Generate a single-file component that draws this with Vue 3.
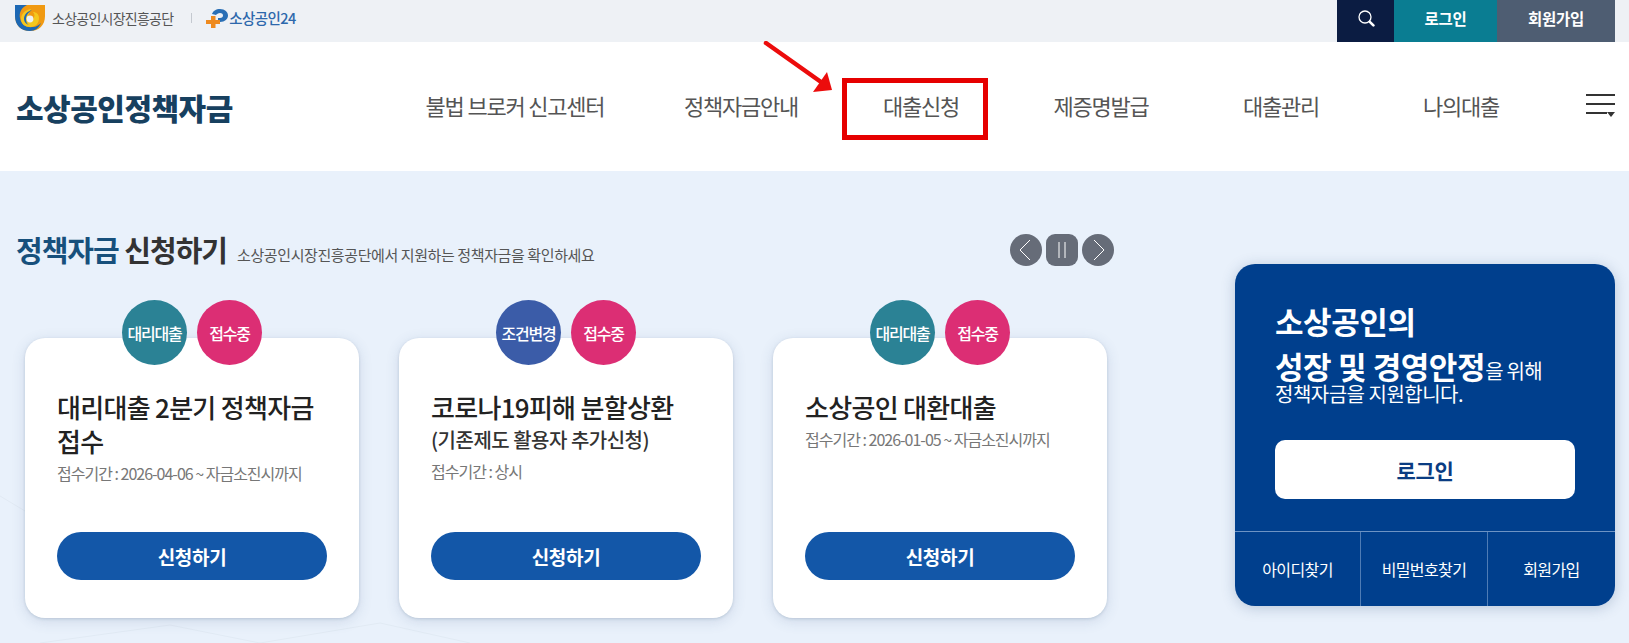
<script setup>
const nav = ['불법 브로커 신고센터', '정책자금안내', '대출신청', '제증명발급', '대출관리', '나의대출']

const cards = [
  { id: 1, badge: '대리대출', badgeType: 'teal', title: '대리대출 2분기 정책자금 접수', sub: '', period: '접수기간 : 2026-04-06 ~ 자금소진시까지' },
  { id: 2, badge: '조건변경', badgeType: 'blue', title: '코로나19피해 분할상환', sub: '(기존제도 활용자 추가신청)', period: '접수기간 : 상시' },
  { id: 3, badge: '대리대출', badgeType: 'teal', title: '소상공인 대환대출', sub: '', period: '접수기간 : 2026-01-05 ~ 자금소진시까지' },
]

const links = ['아이디찾기', '비밀번호찾기', '회원가입']
</script>

<template>
  <div class="page">
    <div class="topbar">
      <div class="top-left">
        <svg class="logo-org" viewBox="0 0 30 26" width="30" height="26">
          <path d="M0 0h30v11c0 9-6 15-15 15S0 20 0 11z" fill="#f09a12" />
          <path d="M0 0h12C6 3 4 8 5 13c1 6 6 10 13 9 3 0 6-2 8-4-2 5-6 8-11 8C6 26 0 20 0 11z" fill="#1c68b4" />
          <path d="M16 4c-6 1-10 5-10 10 0 5 4 8 9 8 6 0 9-4 9-9 0-4-3-6-6-6 2 2 2 5 0 7-2 1-4 1-5-1 0-4 2-7 3-9z" fill="#f4c71f" />
          <circle cx="15" cy="14" r="3.400" fill="#eef1f5" />
          <path d="M11 14c0-4 3-7 6-9-4 1-8 4-8 9 0 3 2 5 5 6-2-1-3-3-3-6z" fill="#1c68b4" />
        </svg>
        <span class="org-name">소상공인시장진흥공단</span>
        <span class="top-sep"></span>
        <svg class="logo-24" viewBox="0 0 22 20" width="22" height="20">
          <path d="M6 5C7 2 10 0 14 0c5 0 8 3 8 6.500S19 13 14 13h-2V9h2c2 0 3-1 3-2.500S16 4 14 4c-2 0-3 1-4 2z" fill="#2a6fb5" />
          <path d="M5 7h4.500v4H14v4H9.500v4H5v-4H0v-4h5z" fill="#ee8a1e" />
        </svg>
        <span class="brand-24">소상공인24</span>
      </div>
      <div class="top-right">
        <div class="top-btn search">
          <svg viewBox="0 0 18 18" width="18" height="18" fill="none" stroke="#fff">
            <circle cx="8" cy="8" r="6" stroke-width="1.300" />
            <path d="M12.800 12.800l3.600 3.600" stroke-width="2.600" stroke-linecap="round" />
          </svg>
        </div>
        <div class="top-btn login">로그인</div>
        <div class="top-btn join">회원가입</div>
      </div>
    </div>

    <header class="header">
      <h1 class="site-title">소상공인정책자금</h1>
      <nav class="gnb">
        <a v-for="item in nav" :key="item" class="gnb-item">{{ item }}</a>
      </nav>
      <div class="menu-icon">
        <span></span>
        <span></span>
        <span class="short"></span>
      </div>

      <!-- 빨간 표시 (스크린샷 주석) -->
      <svg class="mark-arrow" viewBox="0 0 70 56" width="70" height="56">
        <path d="M3 2l55 39" stroke="#ec0c0c" stroke-width="4.500" stroke-linecap="round" />
        <path d="M69 49L64 31 50 51z" fill="#ec0c0c" />
      </svg>
      <div class="mark-box"></div>
    </header>

    <main class="main">
      <svg class="bg-lines" viewBox="0 0 1629 472" width="1629" height="472" fill="none" stroke="#e1eaf4">
        <path d="M0 325l40 24 30-14M40 472l130-18M170 454l90 18M260 472l120-20 90 20" />
      </svg>

      <section class="apply">
        <div class="apply-head">
          <h2 class="apply-title"><em>정책자금</em> 신청하기</h2>
          <p class="apply-desc">소상공인시장진흥공단에서 지원하는 정책자금을 확인하세요</p>
          <div class="controls">
            <button class="ctrl round">
              <svg viewBox="0 0 32 32" width="32" height="32" fill="none" stroke="#fff" stroke-width="1"><path d="M20 6L10 16l10 10" /></svg>
            </button>
            <button class="ctrl">
              <svg viewBox="0 0 32 32" width="32" height="32" fill="none" stroke="#fff" stroke-width="1"><path d="M13 8v16M19 8v16" /></svg>
            </button>
            <button class="ctrl round">
              <svg viewBox="0 0 32 32" width="32" height="32" fill="none" stroke="#fff" stroke-width="1"><path d="M12 6l10 10-10 10" /></svg>
            </button>
          </div>
        </div>

        <div class="cards">
          <article v-for="card in cards" :key="card.id" class="card">
            <div class="badges">
              <span class="badge" :class="card.badgeType">{{ card.badge }}</span>
              <span class="badge pink">접수중</span>
            </div>
            <h3 class="card-title">{{ card.title }}</h3>
            <p v-if="card.sub" class="card-sub">{{ card.sub }}</p>
            <p class="card-period">{{ card.period }}</p>
            <button class="card-btn">신청하기</button>
          </article>
        </div>
      </section>

      <aside class="panel">
        <div class="panel-body">
          <p class="panel-text">
            <strong>소상공인의<br />성장 및 경영안정</strong>을 위해
          </p>
          <p class="panel-sub">정책자금을 지원합니다.</p>
          <button class="panel-login">로그인</button>
        </div>
        <div class="panel-links">
          <a v-for="link in links" :key="link">{{ link }}</a>
        </div>
      </aside>
    </main>
  </div>
</template>

<style scoped>
.page {
  width: 1629px;
  height: 643px;
  overflow: hidden;
  background: #e9f1fb;
  font-family: "Noto Sans CJK KR", "Noto Sans", sans-serif;
}

.topbar {
  height: 42px;
  display: flex;
  justify-content: space-between;
  background: #eef1f5;
  padding: 0 14px 0 15px;
}

.top-left {
  display: flex;
  align-items: center;
  padding-bottom: 7px;
}

.logo-org {
  margin-top: 1px;
}

.org-name {
  margin-left: 7px;
  font-size: 14px;
  letter-spacing: -0.75px;
  color: #555;
}

.top-sep {
  width: 1px;
  height: 10px;
  margin: 0 14px 0 18px;
  background: #c4c9d0;
}

.logo-24 {
  margin-top: 2px;
}

.brand-24 {
  margin-left: 1px;
  font-size: 14.5px;
  font-weight: 500;
  letter-spacing: -0.6px;
  color: #2d68ac;
}

.top-right {
  display: flex;
}

.top-btn {
  display: flex;
  align-items: center;
  justify-content: center;
  padding-bottom: 7px;
  font-size: 15.5px;
  font-weight: 700;
  color: #fff;
  letter-spacing: -0.3px;
}

.search {
  width: 57px;
  background: #0b1c42;
}

.login {
  width: 103px;
  background: #0a7d92;
}

.join {
  width: 118px;
  background: #4e5d72;
}

.header {
  position: relative;
  height: 129px;
  display: flex;
  align-items: center;
  padding: 0 14px 0 16px;
  background: #fff;
}

.site-title {
  width: 363px;
  margin: 0;
  font-size: 30px;
  font-weight: 900;
  letter-spacing: -0.5px;
  color: #17405f;
}

.gnb {
  display: grid;
  grid-template-columns: 272px repeat(5, 180px);
  margin-bottom: 4px;
  text-align: center;
}

.gnb-item {
  font-size: 22px;
  font-weight: 400;
  letter-spacing: -1.2px;
  color: #555;
}

.menu-icon {
  position: relative;
  margin-left: auto;
  margin-bottom: 5px;
  width: 29px;
  display: flex;
  flex-direction: column;
  gap: 7px;
}

.menu-icon span {
  height: 2px;
  background: #333;
}

.menu-icon .short {
  width: 21px;
}

.menu-icon .short::after {
  content: "";
  position: absolute;
  right: 0;
  bottom: -3px;
  border: 4px solid transparent;
  border-bottom: none;
  border-top: 5px solid #333;
}

.mark-arrow {
  position: absolute;
  left: 763px;
  top: -1px;
}

.mark-box {
  position: absolute;
  left: 842px;
  top: 36px;
  width: 146px;
  height: 62px;
  box-sizing: border-box;
  border: 5px solid #e60000;
}

.main {
  position: relative;
  height: 472px;
  display: flex;
  overflow: hidden;
}

.bg-lines {
  position: absolute;
  left: 0;
  top: 0;
}

.apply {
  position: relative;
  width: 1098px;
  margin-left: 16px;
}

.apply-head {
  height: 32px;
  margin-top: 63px;
  display: flex;
  align-items: center;
}

.apply-title {
  margin: 0 0 2px;
  font-size: 29px;
  font-weight: 700;
  letter-spacing: -1px;
  color: #333;
}

.apply-title em {
  font-style: normal;
  color: #17507c;
}

.apply-desc {
  margin: 8px 0 0 10px;
  font-size: 15px;
  letter-spacing: -0.4px;
  color: #555;
}

.controls {
  margin-left: auto;
  display: flex;
  gap: 4px;
}

.ctrl {
  width: 32px;
  height: 32px;
  padding: 0;
  border: none;
  border-radius: 9px;
  background: #666c78;
}

.ctrl svg {
  display: block;
}

.ctrl.round {
  border-radius: 50%;
}

.cards {
  margin: 72px 0 0 9px;
  display: flex;
  gap: 40px;
}

.card {
  position: relative;
  width: 334px;
  height: 280px;
  box-sizing: border-box;
  padding: 52px 32px 38px;
  display: flex;
  flex-direction: column;
  background: #fff;
  border-radius: 20px;
  box-shadow: 0 1px 3px rgba(70, 100, 130, 0.2), 0 3px 14px rgba(60, 90, 130, 0.16);
}

.badges {
  position: absolute;
  left: 0;
  right: 0;
  top: -38px;
  display: flex;
  justify-content: center;
  gap: 10px;
}

.badge {
  width: 65px;
  height: 65px;
  display: flex;
  align-items: center;
  justify-content: center;
  border-radius: 50%;
  font-size: 16px;
  font-weight: 500;
  letter-spacing: -1.2px;
  color: #fff;
}

.badge.teal {
  background: #2b8295;
}

.badge.blue {
  background: #3b5ca8;
}

.badge.pink {
  background: #dc2e74;
}

.card-title {
  margin: 0;
  font-size: 26px;
  font-weight: 500;
  line-height: 34px;
  letter-spacing: -0.7px;
  color: #222;
}

.card-sub {
  margin: 0;
  font-size: 20px;
  font-weight: 500;
  line-height: 32px;
  letter-spacing: -0.5px;
  color: #333;
}

.card-period {
  margin: 4px 0 0;
  font-size: 16px;
  line-height: 22px;
  letter-spacing: -1px;
  color: #777;
}

.card-btn {
  margin-top: auto;
  height: 48px;
  border: none;
  border-radius: 24px;
  background: #1357a8;
  font-family: inherit;
  font-size: 19px;
  font-weight: 700;
  letter-spacing: -0.3px;
  color: #fff;
}

.panel {
  position: relative;
  width: 380px;
  height: 342px;
  margin: 93px 14px 0 auto;
  display: flex;
  flex-direction: column;
  background: #003f8d;
  border-radius: 20px;
  box-shadow: 0 2px 14px rgba(40, 70, 120, 0.25);
  overflow: hidden;
}

.panel-body {
  flex: 1;
  padding: 37px 40px 0;
}

.panel-text {
  margin: 0;
  font-size: 20px;
  line-height: 40px;
  letter-spacing: -0.7px;
  color: #fff;
}

.panel-text strong {
  font-size: 31px;
  font-weight: 700;
  letter-spacing: -0.4px;
}

.panel-sub {
  margin: -11px 0 0;
  font-size: 20px;
  line-height: 27px;
  letter-spacing: -0.5px;
  color: #fff;
}

.panel-login {
  display: block;
  width: 300px;
  height: 59px;
  margin-top: 33px;
  border: none;
  border-radius: 10px;
  background: #fff;
  font-family: inherit;
  font-size: 21px;
  font-weight: 700;
  letter-spacing: -0.3px;
  color: #0a3c82;
}

.panel-links {
  height: 74px;
  display: grid;
  grid-template-columns: 125px 127px 128px;
  border-top: 1px solid #6d93c4;
}

.panel-links a {
  display: flex;
  align-items: center;
  justify-content: center;
  font-size: 16px;
  letter-spacing: -0.6px;
  color: #fff;
  border-left: 1px solid #4f7cb5;
}

.panel-links a:first-child {
  border-left: none;
}
</style>

<style>
html,
body {
  margin: 0;
  overflow: hidden;
}
</style>
